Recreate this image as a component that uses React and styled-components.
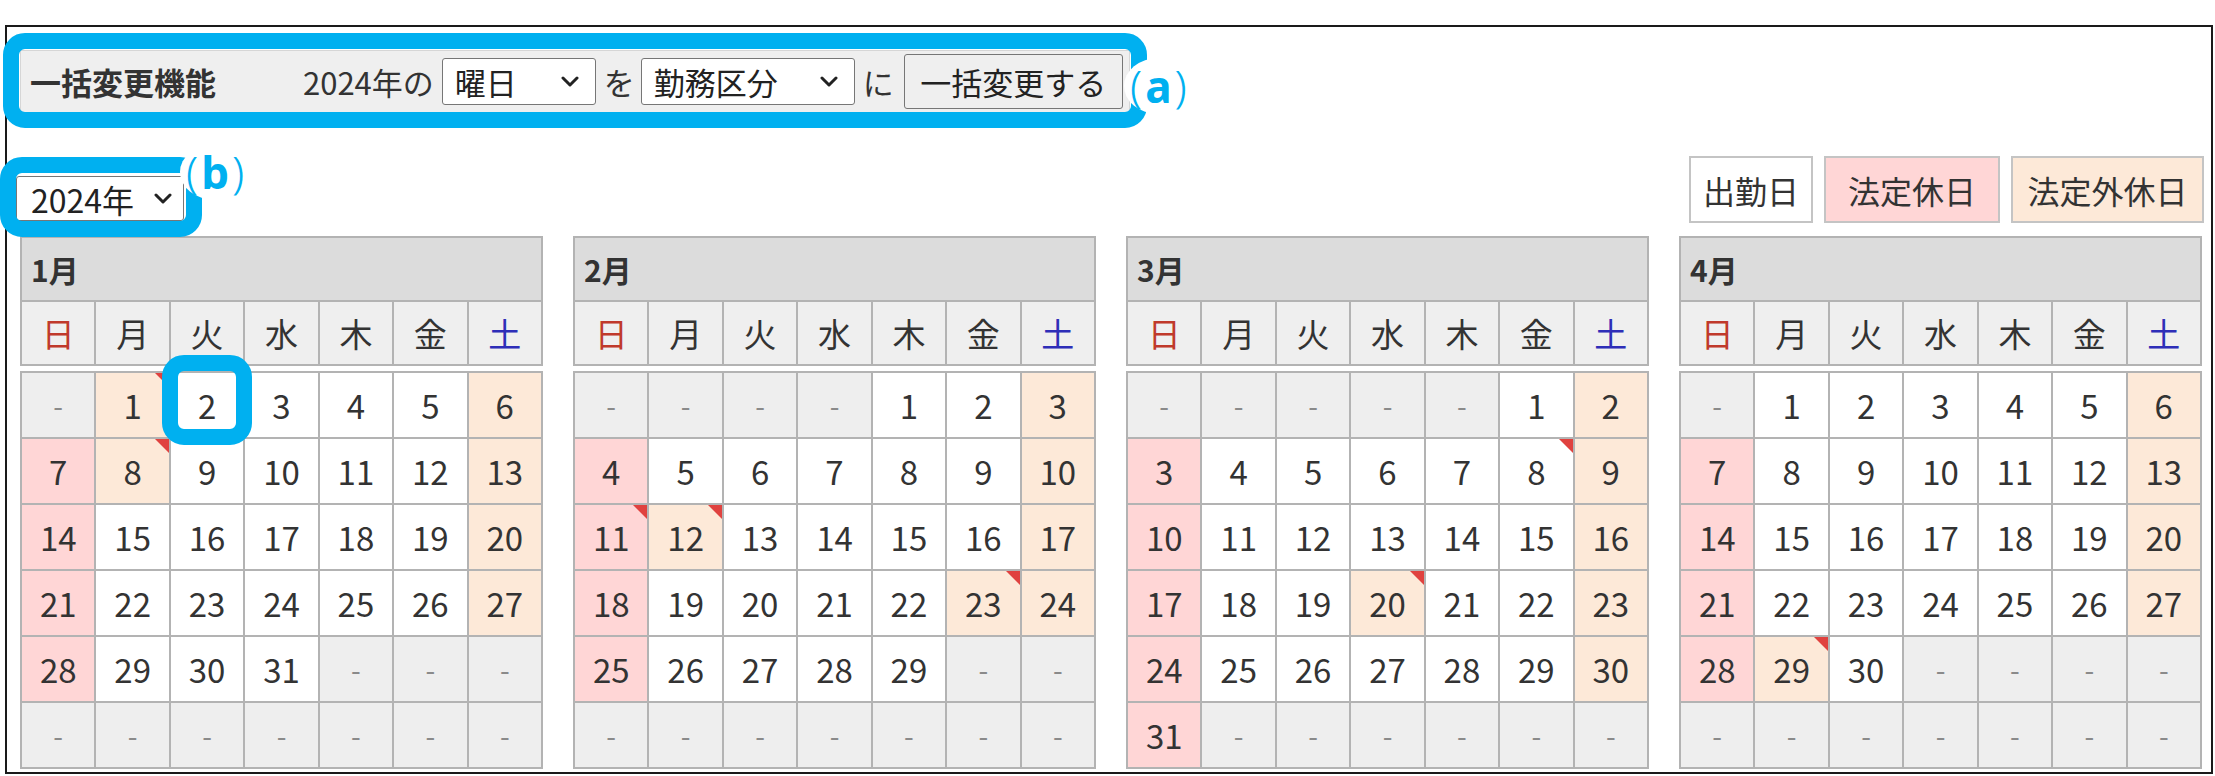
import React from "react";
import styled, { createGlobalStyle } from "styled-components";

const CYAN = "#00b0f0";
const YEAR = 2024;

const GlobalStyle = createGlobalStyle`
  body {
    margin: 0;
    background: #fff;
    font-family: "Noto Sans CJK JP", "Noto Sans", sans-serif;
    color: #333;
  }
`;

// holidays and marked days (red corner)
const marked = {
  "1-1": "extra",
  "1-8": "extra",
  "2-11": "legal",
  "2-12": "extra",
  "2-23": "extra",
  "3-8": "work",
  "3-20": "extra",
  "4-29": "extra",
};

const kindBg = {
  none: "#eeeeee",
  work: "#ffffff",
  legal: "#ffd6d6",
  extra: "#fde9d8",
};

const weekdays = [
  { label: "日", color: "#c0392b" },
  { label: "月", color: "#333" },
  { label: "火", color: "#333" },
  { label: "水", color: "#333" },
  { label: "木", color: "#333" },
  { label: "金", color: "#333" },
  { label: "土", color: "#2e2eb8" },
];

function buildMonth(m) {
  const first = new Date(YEAR, m - 1, 1).getDay();
  const days = new Date(YEAR, m, 0).getDate();
  const cells = [];
  for (let i = 0; i < 42; i++) {
    const d = i - first + 1;
    if (d < 1 || d > days) {
      cells.push({ d: null, kind: "none" });
      continue;
    }
    const dow = i % 7;
    const key = `${m}-${d}`;
    let kind = dow === 0 ? "legal" : dow === 6 ? "extra" : "work";
    const mark = key in marked;
    if (mark) kind = marked[key];
    cells.push({ d, kind, mark, focus: m === 1 && d === 2 });
  }
  return cells;
}

const Chevron = () => (
  <svg width="18" height="11" viewBox="0 0 18 11">
    <polyline
      points="2,2 9,9 16,2"
      fill="none"
      stroke="#222"
      strokeWidth="3"
      strokeLinecap="round"
      strokeLinejoin="round"
    />
  </svg>
);

export default function App() {
  return (
    <>
      <GlobalStyle />
      <Frame>
        <ToolbarWrap>
          <Toolbar>
            <ToolTitle>一括変更機能</ToolTitle>
            <span>2024年の</span>
            <SelectBox $w={154} $ml={8}>
              曜日 <Chevron />
            </SelectBox>
            <Particle>を</Particle>
            <SelectBox $w={214}>
              勤務区分 <Chevron />
            </SelectBox>
            <Particle>に</Particle>
            <Button>一括変更する</Button>
          </Toolbar>
          <Ring $t={-17} $l={-17} $r={-17} $b={-15} />
          <Tag $l={1104} $t={8}>
            <Paren>(</Paren>
            <Letter>a</Letter>
            <Paren>)</Paren>
          </Tag>
        </ToolbarWrap>

        <SubRow>
          <YearWrap>
            <YearSelect>
              2024年 <Chevron />
            </YearSelect>
            <Ring $t={-19} $l={-16} $r={-18} $b={-16} />
            <Tag $l={164} $t={-32}>
              <Paren>(</Paren>
              <Letter>b</Letter>
              <Paren>)</Paren>
            </Tag>
          </YearWrap>
          <Legend>
            <LegendBox $w={124} $bg="#ffffff">出勤日</LegendBox>
            <LegendBox $w={176} $bg="#ffd6d6">法定休日</LegendBox>
            <LegendBox $w={193} $bg="#fde9d8">法定外休日</LegendBox>
          </Legend>
        </SubRow>

        <Months>
          {[1, 2, 3, 4].map((m) => (
            <Month key={m}>
              <HeadGrid>
                <MonthTitle>{m}月</MonthTitle>
                {weekdays.map((w) => (
                  <WeekCell key={w.label} $color={w.color}>
                    {w.label}
                  </WeekCell>
                ))}
              </HeadGrid>
              <BodyGrid>
                {buildMonth(m).map((c, i) => (
                  <DayCell key={i} $kind={c.kind} $mark={c.mark}>
                    {c.d ? c.d : <Dash>-</Dash>}
                    {c.focus && <Ring $t={-18} $l={-9} $r={-9} $b={-8} />}
                  </DayCell>
                ))}
              </BodyGrid>
            </Month>
          ))}
        </Months>
      </Frame>
    </>
  );
}

const Frame = styled.div`
  box-sizing: border-box;
  width: 2208px;
  height: 749px;
  margin: 25px 0 0 5px;
  border: 2px solid #1a1a1a;
  padding: 23px 9px 0 13px;
`;

const ToolbarWrap = styled.div`
  position: relative;
  width: 1110px;
`;

const Toolbar = styled.div`
  box-sizing: border-box;
  display: flex;
  align-items: center;
  height: 63px;
  padding-left: 9px;
  background: #efefef;
  border: 1px solid #d6d6d6;
  font-size: 31px;
  color: #333;
`;

const ToolTitle = styled.div`
  width: 273px;
  font-weight: bold;
`;

const SelectBox = styled.div`
  box-sizing: border-box;
  display: flex;
  align-items: center;
  justify-content: space-between;
  width: ${(p) => p.$w}px;
  height: 47px;
  margin-left: ${(p) => p.$ml || 0}px;
  padding: 0 16px 0 12px;
  background: #fff;
  border: 1px solid #767676;
  border-radius: 3px;
  font-size: 31px;
  color: #222;
`;

const Particle = styled.span`
  margin: 0 6px 0 8px;
`;

const Button = styled.div`
  box-sizing: border-box;
  display: flex;
  align-items: center;
  justify-content: center;
  width: 219px;
  height: 55px;
  margin-left: 4px;
  background: #efefef;
  border: 1px solid #767676;
  border-radius: 3px;
  font-size: 31px;
  color: #222;
`;

const Ring = styled.div`
  position: absolute;
  top: ${(p) => p.$t}px;
  left: ${(p) => p.$l}px;
  right: ${(p) => p.$r}px;
  bottom: ${(p) => p.$b}px;
  border: 16px solid ${CYAN};
  border-radius: 22px;
  pointer-events: none;
  z-index: 2;
`;

const Tag = styled.span`
  position: absolute;
  left: ${(p) => p.$l}px;
  top: ${(p) => p.$t}px;
  z-index: 3;
  padding: 4px 6px;
  background: #fff;
  border-radius: 50%;
  color: ${CYAN};
  font-family: "Noto Sans", sans-serif;
  font-size: 44px;
  line-height: 1.1;
`;

const Paren = styled.span`
  font-weight: 300;
`;

const Letter = styled.span`
  font-weight: 700;
  margin: 0 3px;
`;

const SubRow = styled.div`
  display: flex;
  justify-content: space-between;
  align-items: flex-end;
  margin-top: 43px;
  margin-right: -2px;
`;

const YearWrap = styled.div`
  position: relative;
  margin-left: -4px;
  margin-bottom: 2px;
`;

const YearSelect = styled.div`
  box-sizing: border-box;
  display: flex;
  align-items: center;
  justify-content: space-between;
  width: 168px;
  height: 45px;
  padding: 0 11px 0 14px;
  background: #fff;
  border: 1px solid #767676;
  border-radius: 3px;
  font-size: 32px;
  color: #222;
`;

const Legend = styled.div`
  display: flex;
  gap: 11px;
`;

const LegendBox = styled.div`
  box-sizing: border-box;
  display: flex;
  align-items: center;
  justify-content: center;
  width: ${(p) => p.$w}px;
  height: 67px;
  background: ${(p) => p.$bg};
  border: 2px solid #c4c4c4;
  font-size: 32px;
  color: #333;
`;

const Months = styled.div`
  display: flex;
  gap: 30px;
  margin-top: 13px;
`;

const Month = styled.div`
  width: 523px;
`;

const HeadGrid = styled.div`
  display: grid;
  grid-template-columns: repeat(7, 1fr);
  gap: 2px;
  padding: 2px;
  background: #b3b3b3;
`;

const MonthTitle = styled.div`
  grid-column: 1 / -1;
  display: flex;
  align-items: center;
  height: 62px;
  padding-left: 9px;
  background: #dcdcdc;
  font-size: 30px;
  font-weight: bold;
  color: #333;
`;

const WeekCell = styled.div`
  display: flex;
  align-items: center;
  justify-content: center;
  height: 62px;
  background: #efefef;
  font-size: 33px;
  color: ${(p) => p.$color};
`;

const BodyGrid = styled.div`
  display: grid;
  grid-template-columns: repeat(7, 1fr);
  gap: 2px;
  padding: 2px;
  margin-top: 5px;
  background: #b3b3b3;
`;

const DayCell = styled.div`
  position: relative;
  display: flex;
  align-items: center;
  justify-content: center;
  height: 64px;
  background: ${(p) => kindBg[p.$kind]};
  font-size: 33px;
  color: #333;

  &::after {
    content: "";
    display: ${(p) => (p.$mark ? "block" : "none")};
    position: absolute;
    top: 0;
    right: 0;
    border-top: 14px solid #e0423f;
    border-left: 14px solid transparent;
  }
`;

const Dash = styled.span`
  color: #8a8a8a;
  font-size: 28px;
`;
